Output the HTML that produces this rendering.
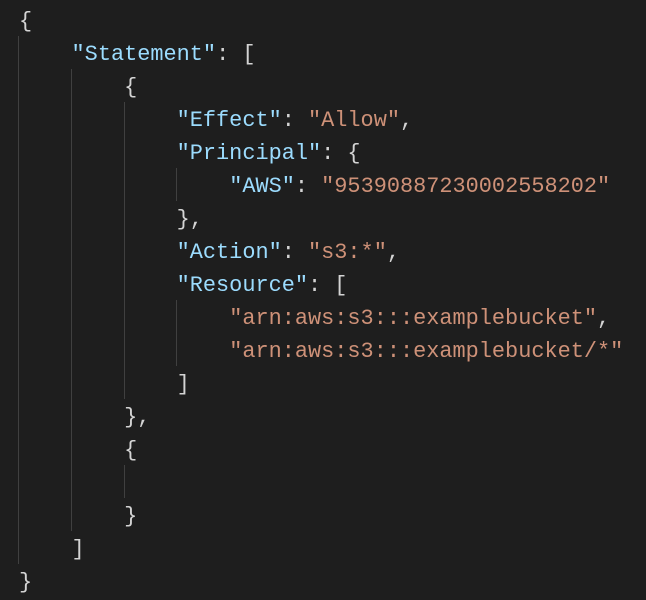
<!DOCTYPE html>
<html><head><style>
html,body{margin:0;padding:0;background:#1e1e1e;width:646px;height:600px;overflow:hidden}
pre{margin:0;position:absolute;left:19px;top:5px;font-family:"Liberation Mono",monospace;font-size:21.9px;line-height:33px;color:#d4d4d4}
.k{color:#9cdcfe}.s{color:#ce9178}
.g{position:absolute;width:1px;background:#404040}
</style></head><body>
<div class="g" style="left:18px;top:36px;height:528px"></div>
<div class="g" style="left:71px;top:69px;height:462px"></div>
<div class="g" style="left:124px;top:102px;height:297px"></div>
<div class="g" style="left:124px;top:465px;height:33px"></div>
<div class="g" style="left:176px;top:168px;height:33px"></div>
<div class="g" style="left:176px;top:300px;height:66px"></div>
<pre>{
    <span class="k">"Statement"</span>: [
        {
            <span class="k">"Effect"</span>: <span class="s">"Allow"</span>,
            <span class="k">"Principal"</span>: {
                <span class="k">"AWS"</span>: <span class="s">"95390887230002558202"</span>
            },
            <span class="k">"Action"</span>: <span class="s">"s3:*"</span>,
            <span class="k">"Resource"</span>: [
                <span class="s">"arn:aws:s3:::examplebucket"</span>,
                <span class="s">"arn:aws:s3:::examplebucket/*"</span>
            ]
        },
        {

        }
    ]
}</pre>
</body></html>
